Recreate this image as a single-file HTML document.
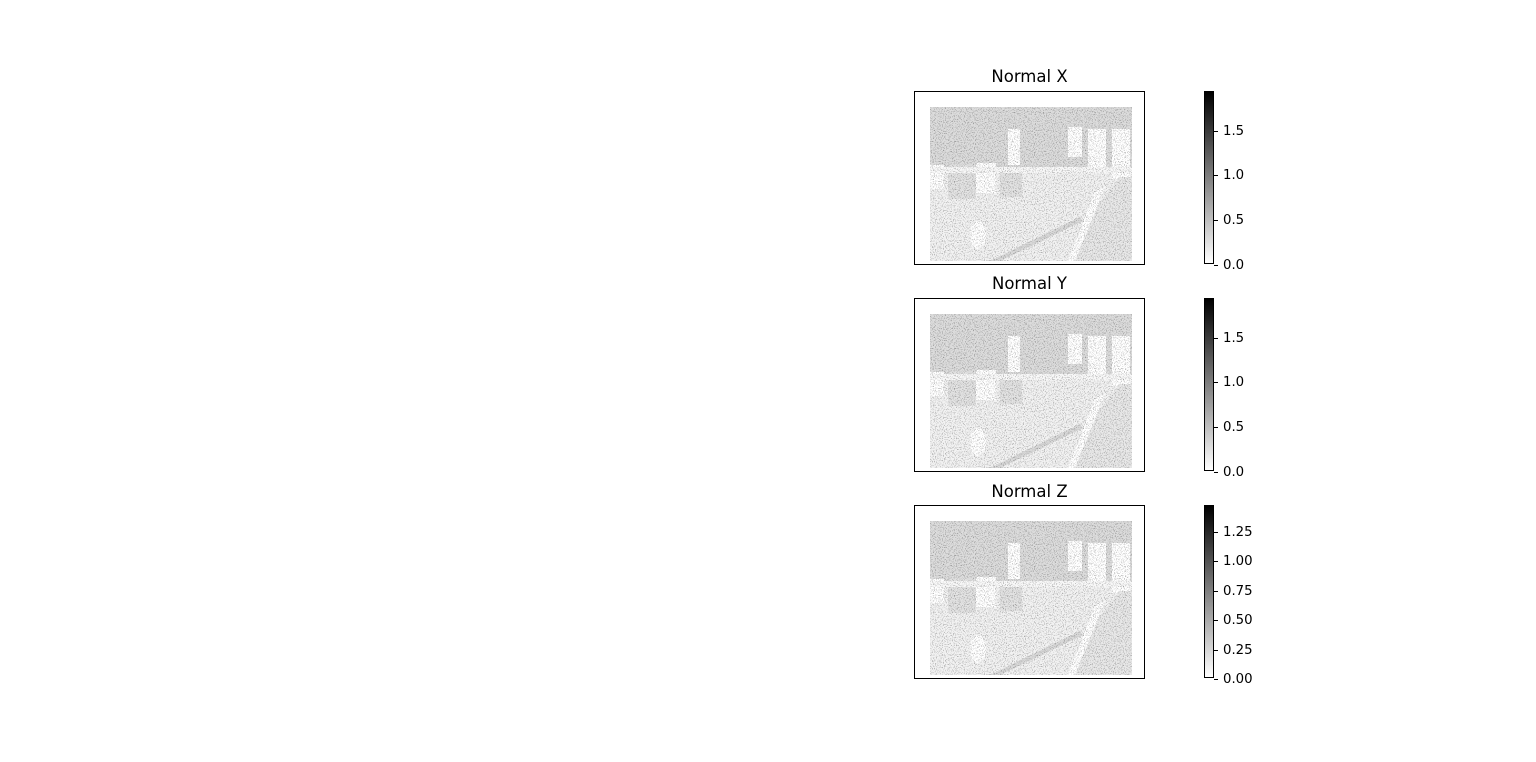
<!DOCTYPE html>
<html><head><meta charset="utf-8"><style>
body{margin:0;width:1536px;height:762px;background:#fff;position:relative;overflow:hidden;font-family:"DejaVu Sans","Liberation Sans",sans-serif;color:#000}
.ax{position:absolute;left:914px;width:229px;height:172px;border:1px solid #000;box-sizing:content-box}
.t{position:absolute;left:914px;width:231px;text-align:center;font-size:16.5px;line-height:18px}
.cb{position:absolute;left:1204px;width:8px;border:1px solid #000;background:linear-gradient(#000,#fff)}
.tk{position:absolute;left:1214px;font-size:13.3px;line-height:14px;white-space:nowrap}
.tk:before{content:"";display:inline-block;width:4px;height:1px;background:#000;vertical-align:middle;margin-right:5px}
.img{position:absolute;left:15px;top:15px}
</style></head><body>

<svg width="0" height="0" style="position:absolute"><defs>
<filter id="n"><feTurbulence type="fractalNoise" baseFrequency="0.9" numOctaves="2" seed="3"/><feColorMatrix type="matrix" values="0 0 0 0 0  0 0 0 0 0  0 0 0 0 0  0 0 0 4 -2.1"/></filter>
<g id="scene">
<rect x="0" y="0" width="202" height="154" fill="#f2f2f2"/>
<rect x="0" y="0" width="202" height="60" fill="#dcdcdc"/>
<rect x="18" y="58" width="28" height="34" fill="#e2e2e2"/>
<rect x="46" y="56" width="20" height="30" fill="#fff"/>
<rect x="70" y="60" width="22" height="30" fill="#e2e2e2"/>
<rect x="158" y="22" width="18" height="40" fill="#fff"/>
<rect x="182" y="22" width="18" height="50" fill="#fff"/>
<rect x="138" y="20" width="14" height="30" fill="#fff"/>
<rect x="0" y="58" width="14" height="24" fill="#fff"/>
<rect x="78" y="22" width="12" height="36" fill="#fff"/>
<rect x="0" y="60" width="202" height="6" fill="#f8f8f8"/>
<polygon points="150,120 190,70 202,70 202,154 140,154" fill="#e8e8e8"/>
<polygon points="165,85 175,80 145,154 138,154" fill="#fff"/>
<polygon points="60,154 150,110 153,114 70,154" fill="#d8d8d8"/>
<ellipse cx="48" cy="128" rx="8" ry="14" fill="#fff"/>
<rect x="0" y="0" width="202" height="154" filter="url(#n)" opacity="0.35"/>
</g></defs></svg>

<div class="t" style="top:68px">Normal X</div>
<div class="ax" style="top:91px"><svg class="img" width="202" height="154"><use href="#scene"/></svg></div>
<div class="cb" style="top:91px;height:171px"></div>
<div class="tk" style="top:259px">0.0</div>
<div class="tk" style="top:214px">0.5</div>
<div class="tk" style="top:169px">1.0</div>
<div class="tk" style="top:125px">1.5</div>

<div class="t" style="top:275px">Normal Y</div>
<div class="ax" style="top:298px"><svg class="img" width="202" height="154"><use href="#scene"/></svg></div>
<div class="cb" style="top:298px;height:171px"></div>
<div class="tk" style="top:466px">0.0</div>
<div class="tk" style="top:421px">0.5</div>
<div class="tk" style="top:376px">1.0</div>
<div class="tk" style="top:332px">1.5</div>

<div class="t" style="top:483px">Normal Z</div>
<div class="ax" style="top:505px"><svg class="img" width="202" height="154"><use href="#scene"/></svg></div>
<div class="cb" style="top:505px;height:171px"></div>
<div class="tk" style="top:673px">0.00</div>
<div class="tk" style="top:644px">0.25</div>
<div class="tk" style="top:614px">0.50</div>
<div class="tk" style="top:585px">0.75</div>
<div class="tk" style="top:555px">1.00</div>
<div class="tk" style="top:526px">1.25</div>

</body></html>
